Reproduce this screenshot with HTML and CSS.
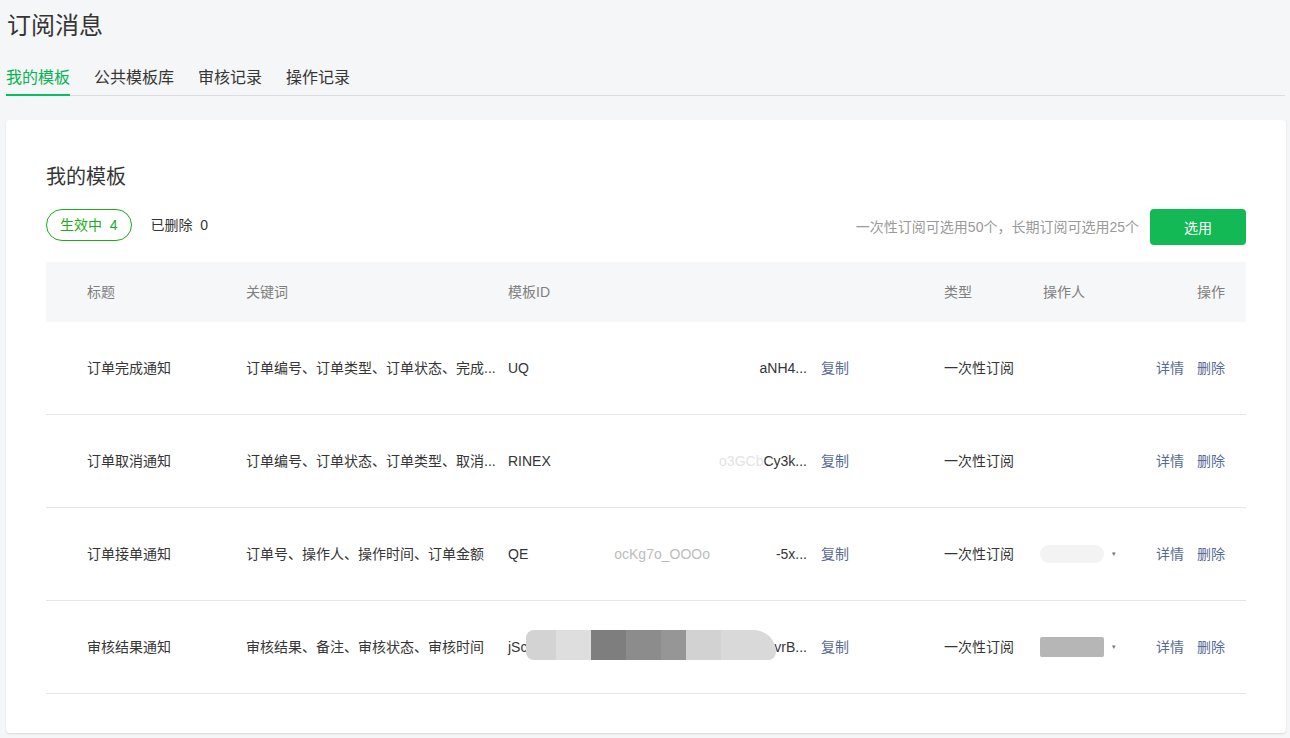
FILE: index.html
```html
<!DOCTYPE html>
<html lang="zh-CN">
<head>
<meta charset="utf-8">
<title>订阅消息</title>
<link rel="stylesheet" href="styles.css">
</head>
<body>
<div class="page">
  <div class="head">
    <h1 class="title">订阅消息</h1>
    <nav class="tabs">
      <a class="tab active">我的模板</a>
      <a class="tab">公共模板库</a>
      <a class="tab">审核记录</a>
      <a class="tab">操作记录</a>
    </nav>
  </div>

  <section class="card">
    <h2 class="card-title">我的模板</h2>
    <div class="toolbar">
      <div class="filters">
        <span class="pill active">生效中&nbsp; 4</span>
        <span class="pill">已删除&nbsp; 0</span>
      </div>
      <div class="actions">
        <span class="hint">一次性订阅可选用50个，长期订阅可选用25个</span>
        <button class="btn-primary">选用</button>
      </div>
    </div>

    <div class="table">
      <div class="row thead">
        <div class="cell c-title">标题</div>
        <div class="cell c-kw">关键词</div>
        <div class="cell c-id">模板ID</div>
        <div class="cell c-type">类型</div>
        <div class="cell c-op">操作人</div>
        <div class="cell c-act">操作</div>
      </div>

      <div class="row">
        <div class="cell c-title">订单完成通知</div>
        <div class="cell c-kw">订单编号、订单类型、订单状态、完成...</div>
        <div class="cell c-id">
          <span class="tid"><span>UQ</span><span class="tail">aNH4...</span></span>
          <a class="link">复制</a>
        </div>
        <div class="cell c-type">一次性订阅</div>
        <div class="cell c-op"></div>
        <div class="cell c-act"><a class="link">详情</a><a class="link">删除</a></div>
      </div>

      <div class="row">
        <div class="cell c-title">订单取消通知</div>
        <div class="cell c-kw">订单编号、订单状态、订单类型、取消...</div>
        <div class="cell c-id">
          <span class="tid"><span>RINEX</span><span class="tail"><span class="faint">o3GCb</span>Cy3k...</span></span>
          <a class="link">复制</a>
        </div>
        <div class="cell c-type">一次性订阅</div>
        <div class="cell c-op"></div>
        <div class="cell c-act"><a class="link">详情</a><a class="link">删除</a></div>
      </div>

      <div class="row">
        <div class="cell c-title">订单接单通知</div>
        <div class="cell c-kw">订单号、操作人、操作时间、订单金额</div>
        <div class="cell c-id">
          <span class="tid"><span>QE</span><span class="mid">ocKg7o_OOOo</span><span class="tail">-5x...</span></span>
          <a class="link">复制</a>
        </div>
        <div class="cell c-type">一次性订阅</div>
        <div class="cell c-op"><span class="blur light"></span><span class="caret">▾</span></div>
        <div class="cell c-act"><a class="link">详情</a><a class="link">删除</a></div>
      </div>

      <div class="row">
        <div class="cell c-title">审核结果通知</div>
        <div class="cell c-kw">审核结果、备注、审核状态、审核时间</div>
        <div class="cell c-id">
          <span class="tid"><span>jSc</span><span class="tail">vrB...</span><span class="smudge"></span></span>
          <a class="link">复制</a>
        </div>
        <div class="cell c-type">一次性订阅</div>
        <div class="cell c-op"><span class="blur dark"></span><span class="caret">▾</span></div>
        <div class="cell c-act"><a class="link">详情</a><a class="link">删除</a></div>
      </div>
    </div>
  </section>
</div>
</body>
</html>
```

FILE: styles.css
```css
* { box-sizing: border-box; }

html, body {
  margin: 0;
  padding: 0;
}

body {
  background: #f5f6f7;
  font-family: "Liberation Sans", "Noto Sans CJK SC", sans-serif;
  color: #353535;
  font-size: 14px;
}

.page {
  width: 1290px;
  height: 738px;
  overflow: hidden;
}

.head {
  padding: 0 5px 0 6px;
}

.title {
  margin: 0;
  padding: 2px 0 0 1px;
  font-size: 24px;
  font-weight: 400;
  line-height: 48px;
  color: #353535;
}

.tabs {
  display: flex;
  gap: 24px;
  margin-top: 12px;
  border-bottom: 1px solid #dcdde0;
}

.tab {
  display: block;
  font-size: 16px;
  line-height: 31px;
  height: 34px;
  margin-bottom: -1px;
  border-bottom: 2px solid transparent;
  color: #353535;
  cursor: pointer;
}

.tab.active {
  color: #07b352;
  border-bottom-color: #07c160;
}

.card {
  margin: 24px 4px 0 6px;
  background: #fff;
  border-radius: 4px;
  box-shadow: 0 1px 2px rgba(0, 0, 0, 0.12);
  padding: 41px 40px 40px 40px;
  height: 613px;
}

.card-title {
  margin: 0;
  font-size: 20px;
  font-weight: 400;
  line-height: 32px;
  color: #353535;
}

.toolbar {
  display: flex;
  justify-content: space-between;
  align-items: flex-start;
  margin-top: 16px;
}

.filters {
  display: flex;
  gap: 5px;
  align-items: center;
}

.pill {
  display: inline-block;
  height: 32px;
  line-height: 30px;
  padding: 0 13px;
  border: 1px solid transparent;
  border-radius: 16px;
  font-size: 14px;
  color: #353535;
}

.pill.active {
  color: #1aad19;
  border-color: #1aad19;
}

.actions {
  display: flex;
  align-items: center;
  gap: 11px;
}

.hint {
  color: #9a9a9a;
  font-size: 14px;
  line-height: 36px;
}

.btn-primary {
  width: 96px;
  height: 36px;
  border: 0;
  border-radius: 4px;
  background: #13b954;
  color: #fff;
  font-family: inherit;
  font-size: 14px;
  padding: 0;
}

.table {
  margin-top: 17px;
}

.row {
  display: grid;
  grid-template-columns: 200px 262px 436px 99px 87px 116px;
  height: 93px;
  align-items: center;
  padding-bottom: 1px;
  border-bottom: 1px solid #e5e6ea;
}

.row.thead {
  height: 60px;
  padding-bottom: 1px;
  background: #f6f7f9;
  border-bottom: 0;
  color: #7f7f7f;
}

.cell {
  white-space: nowrap;
  min-width: 0;
  line-height: 20px;
}

.c-title { padding-left: 41px; }

.c-id {
  display: flex;
  align-items: center;
  gap: 14px;
}

.tid {
  position: relative;
  display: flex;
  width: 299px;
  color: #353535;
}

.tid .tail {
  margin-left: auto;
}

.tid .faint {
  color: #e4e4e4;
}

.tid .mid {
  color: #bdbdbd;
  margin-left: 86px;
}

.smudge {
  position: absolute;
  left: 18px;
  top: -7px;
  width: 250px;
  height: 30px;
  border-radius: 14px 40px 14px 14px;
  background: linear-gradient(90deg, #d3d3d3 0 12%, #dedede 12% 26%, #7e7e7e 26% 40%, #8c8c8c 40% 54%, #969696 54% 64%, #d2d2d2 64% 78%, #d9d9d9 78% 100%);
}

.c-op {
  display: flex;
  align-items: center;
}

.blur {
  display: inline-block;
  width: 64px;
  height: 18px;
  margin-left: -3px;
  border-radius: 9px;
}

.blur.light { background: #f3f3f3; }

.blur.dark {
  background: #b6b6b6;
  border-radius: 2px;
  height: 20px;
}

.caret {
  font-size: 7px;
  color: #777;
  margin-left: 8px;
}

.c-act {
  display: flex;
  justify-content: flex-end;
  gap: 13px;
  padding-right: 21px;
}

.thead .c-act { display: block; text-align: right; }

.link {
  color: #576b95;
  cursor: pointer;
}
```
